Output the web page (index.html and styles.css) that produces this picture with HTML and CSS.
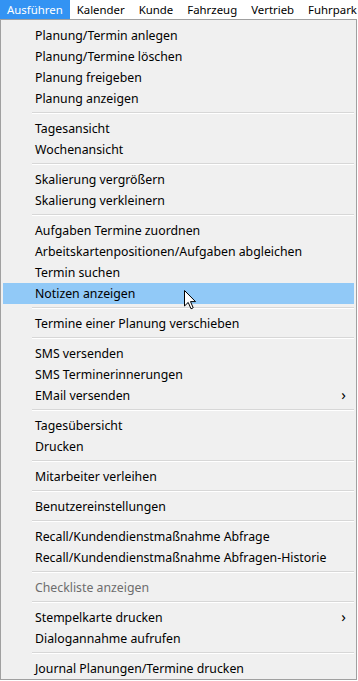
FILE: index.html
```html
<!DOCTYPE html>
<html lang="de">
<head>
    <meta charset="UTF-8">
    <meta name="viewport" content="width=device-width, initial-scale=1.0">
    <title>Ausführen</title>
    <link rel="stylesheet" href="styles.css">
</head>
<body>
    <div class="menu-bar">
        <div class="bar-item active">Ausführen</div>
        <div class="bar-item">Kalender</div>
        <div class="bar-item">Kunde</div>
        <div class="bar-item">Fahrzeug</div>
        <div class="bar-item">Vertrieb</div>
        <div class="bar-item">Fuhrpark</div>
    </div>

    <div class="dropdown">
        <div class="item">Planung/Termin anlegen</div>
        <div class="item">Planung/Termine löschen</div>
        <div class="item">Planung freigeben</div>
        <div class="item">Planung anzeigen</div>
        <div class="sep"></div>
        <div class="item">Tagesansicht</div>
        <div class="item">Wochenansicht</div>
        <div class="sep"></div>
        <div class="item">Skalierung vergrößern</div>
        <div class="item">Skalierung verkleinern</div>
        <div class="sep"></div>
        <div class="item">Aufgaben Termine zuordnen</div>
        <div class="item">Arbeitskartenpositionen/Aufgaben abgleichen</div>
        <div class="item">Termin suchen</div>
        <div class="item hover">Notizen anzeigen
            <!-- mouse pointer -->
            <svg class="cursor" viewBox="0 0 13 20" xmlns="http://www.w3.org/2000/svg">
                <path d="M0.5 0.5 L0.5 16 L4.2 12.4 L7 18.8 L9.2 17.8 L6.5 11.6 L11.5 11.6 Z" fill="#fff" stroke="#000" stroke-width="1" stroke-linejoin="round"/>
            </svg>
        </div>
        <div class="sep"></div>
        <div class="item">Termine einer Planung verschieben</div>
        <div class="sep"></div>
        <div class="item">SMS versenden</div>
        <div class="item">SMS Terminerinnerungen</div>
        <div class="item sub">EMail versenden</div>
        <div class="sep"></div>
        <div class="item">Tagesübersicht</div>
        <div class="item">Drucken</div>
        <div class="sep"></div>
        <div class="item">Mitarbeiter verleihen</div>
        <div class="sep"></div>
        <div class="item">Benutzereinstellungen</div>
        <div class="sep"></div>
        <div class="item">Recall/Kundendienstmaßnahme Abfrage</div>
        <div class="item">Recall/Kundendienstmaßnahme Abfragen-Historie</div>
        <div class="sep"></div>
        <div class="item disabled">Checkliste anzeigen</div>
        <div class="sep"></div>
        <div class="item sub">Stempelkarte drucken</div>
        <div class="item">Dialogannahme aufrufen</div>
        <div class="sep"></div>
        <div class="item">Journal Planungen/Termine drucken</div>
    </div>
</body>
</html>
```

FILE: styles.css
```css
body {
    margin: 0;
    background-color: #ffffff;
    color: #000;
    font-family: "Noto Sans", "Open Sans", sans-serif;
    font-size: 12px;
    overflow: hidden;
}

/* Menu Bar */
.menu-bar {
    height: 19px;
    display: flex;
    align-items: stretch;
    background-color: #fff;
    white-space: nowrap;
    overflow: hidden;
    font-size: 11.4px;
}

.bar-item {
    padding: 0 7px 0 7px;
    line-height: 19px;
}

.bar-item.active {
    background-color: #3393f3;
    color: #fff;
}

/* Dropdown */
.dropdown {
    width: 357px;
    height: 661px;
    box-sizing: border-box;
    background-color: #f0f0f0;
    border: 1px solid #a0a0a0;
    padding: 5px 2px 0 2px;
    overflow: hidden;
}

.item {
    position: relative;
    height: 21px;
    line-height: 21px;
    padding-left: 32px;
    white-space: nowrap;
    font-size: 12.3px;
}

.item.hover {
    background-color: #91c9f7;
}

.item.disabled {
    color: #6d6d6d;
}

.item.sub::after {
    content: "›";
    position: absolute;
    right: 8px;
    top: 0;
    font-size: 15px;
    line-height: 19px;
}

.sep {
    height: 1px;
    margin: 3px 0 4px 29px;
    background-color: #d7d7d7;
    border-bottom: 1px solid #fff;
}

.cursor {
    position: absolute;
    left: 181px;
    top: 7px;
    width: 13px;
    height: 20px;
}
```
